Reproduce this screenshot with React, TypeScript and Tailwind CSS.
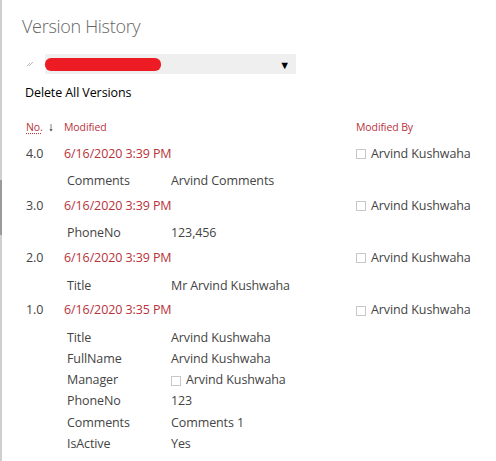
import { ReactNode } from 'react';

type Change = { label: string; value: string; person?: boolean };
type Version = { no: string; modified: string; changes: Change[] };

const versions: Version[] = [
  { no: '4.0', modified: '6/16/2020 3:39 PM', changes: [{ label: 'Comments', value: 'Arvind Comments' }] },
  { no: '3.0', modified: '6/16/2020 3:39 PM', changes: [{ label: 'PhoneNo', value: '123,456' }] },
  { no: '2.0', modified: '6/16/2020 3:39 PM', changes: [{ label: 'Title', value: 'Mr Arvind Kushwaha' }] },
  {
    no: '1.0',
    modified: '6/16/2020 3:35 PM',
    changes: [
      { label: 'Title', value: 'Arvind Kushwaha' },
      { label: 'FullName', value: 'Arvind Kushwaha' },
      { label: 'Manager', value: 'Arvind Kushwaha', person: true },
      { label: 'PhoneNo', value: '123' },
      { label: 'Comments', value: 'Comments 1' },
      { label: 'IsActive', value: 'Yes' },
    ],
  },
];

const Box = () => <span className="inline-block w-[10px] h-[10px] border border-[#c8c8c8] bg-white mr-[5px] shrink-0" />;

const Person = ({ children }: { children: ReactNode }) => (
  <span className="flex items-center">
    <Box />
    <span>{children}</span>
  </span>
);

const App = () => {
  return (
    <div className="flex w-[496px] h-[461px] bg-white overflow-hidden font-['Open_Sans',sans-serif] text-[#444] tracking-[-0.1px]">
      {/* window edge on the left */}
      <div className="w-[2px] flex flex-col bg-[#cfcfcf]">
        <div className="h-[180px]" />
        <div className="h-[55px] bg-[#9a9a9a]" />
      </div>

      <div className="flex-1 flex flex-col">
        <h1 className="pl-[20px] pt-3 text-[18px] leading-7 font-light text-[#666] tracking-[-0.3px]">Version History</h1>

        <div className="flex items-center mt-[14px] h-5">
          <svg width="8" height="6" viewBox="0 0 8 6" className="ml-[24px] mr-[11px]">
            <path d="M1 5 L4 2 M3 5 L7 1" stroke="#bbb" strokeWidth="1" fill="none" />
          </svg>
          <div className="w-[251px] h-5 bg-[#efefef] flex items-center pr-[6px]">
            <span className="w-[116px] h-[13px] rounded-[6px] bg-[#ed1c24]" />
            <span className="ml-auto text-[11px] leading-none text-black">▼</span>
          </div>
        </div>

        <div className="pl-[23px] mt-[9px] text-[12.5px] leading-5 text-black">Delete All Versions</div>

        <div className="pl-[24px] mt-4 grid grid-cols-[38px_292px_auto] text-[10.5px] leading-4 text-[#b8323a]">
          <span className="flex items-center gap-[5px]">
            <span className="underline decoration-dotted decoration-[#b8323a] underline-offset-2">No.</span>
            <span className="text-black text-[12px] font-semibold">↓</span>
          </span>
          <span>Modified</span>
          <span>Modified By</span>
        </div>

        <div className="mt-[6px] flex flex-col">
          {versions.map((v) => (
            <div key={v.no} className="flex flex-col">
              <div className="pl-[24px] h-[26px] grid grid-cols-[38px_292px_auto] items-center text-[12.5px]">
                <span className="text-[#444]">{v.no}</span>
                <span className="text-[#b8323a]">{v.modified}</span>
                <Person>Arvind Kushwaha</Person>
              </div>
              <div className="pt-1 pb-px flex flex-col">
                {v.changes.map((c) => (
                  <div key={c.label} className="pl-[65px] h-[21.2px] grid grid-cols-[104px_auto] items-center text-[12.5px]">
                    <span>{c.label}</span>
                    {c.person ? <Person>{c.value}</Person> : <span>{c.value}</span>}
                  </div>
                ))}
              </div>
            </div>
          ))}
        </div>
      </div>
    </div>
  );
};

export default App;
